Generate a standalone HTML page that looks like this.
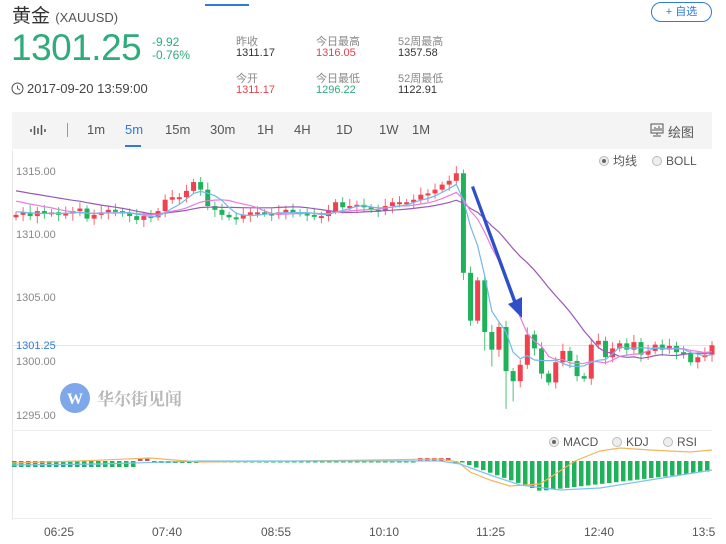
<!DOCTYPE html>
<html><head><meta charset="utf-8"><style>
*{margin:0;padding:0;box-sizing:border-box}
body{width:726px;height:544px;background:#fff;font-family:"Liberation Sans","Noto Sans CJK SC",sans-serif;position:relative;overflow:hidden;color:#333}
.a{position:absolute;white-space:nowrap}
.lb{font-size:11px;color:#888}
.v{font-size:11px;color:#333}
.tb{position:absolute;left:12px;top:112px;width:700px;height:37px;background:#f4f4f4}
.tb span{position:absolute;top:10px;font-size:13px;color:#555}
</style></head><body>
<div class="a" style="left:12px;top:1px;font-size:19px;color:#333">黄金 <span style="font-size:13px;color:#555">(XAUUSD)</span></div>
<div class="a" style="left:205px;top:4px;width:44px;height:2px;background:#2f7bd6"></div>
<div class="a" style="left:11px;top:27px;font-size:37px;color:#2fab7c;letter-spacing:-0.5px">1301.25</div>
<div class="a" style="left:152px;top:36px;font-size:12px;color:#2fab7c;line-height:13px">-9.92<br>-0.76%</div>
<div class="a lb" style="left:236px;top:33px">昨收</div><div class="a v" style="left:236px;top:47px">1311.17</div>
<div class="a lb" style="left:316px;top:33px">今日最高</div><div class="a v" style="left:316px;top:47px;color:#e4424e">1316.05</div>
<div class="a lb" style="left:398px;top:33px">52周最高</div><div class="a v" style="left:398px;top:47px">1357.58</div>
<div class="a lb" style="left:236px;top:70px">今开</div><div class="a v" style="left:236px;top:84px;color:#e4424e">1311.17</div>
<div class="a lb" style="left:316px;top:70px">今日最低</div><div class="a v" style="left:316px;top:84px;color:#2fab7c">1296.22</div>
<div class="a lb" style="left:398px;top:70px">52周最低</div><div class="a v" style="left:398px;top:84px">1122.91</div>
<svg class="a" style="left:11px;top:82px" width="13" height="13"><circle cx="6.5" cy="6.5" r="5.5" fill="none" stroke="#555" stroke-width="1"/><path d="M6.5 3.5V6.5L9 8" fill="none" stroke="#555"/></svg>
<div class="a" style="left:27px;top:81px;font-size:13px;color:#444">2017-09-20 13:59:00</div>
<div class="a" style="left:651px;top:2px;width:61px;height:20px;border:1px solid #2f7bd6;border-radius:10px;font-size:11px;color:#2f7bd6;text-align:center;line-height:18px">+ 自选</div>
<div class="tb">
<svg style="position:absolute;left:18px;top:12px" width="16" height="12"><path d="M1 5v3M4.5 2v9M8 4v6M11.5 1v10M15 5v3" stroke="#555" stroke-width="1.5"/></svg>
<div style="position:absolute;left:55px;top:11px;width:1px;height:14px;background:#999"></div>
<span style="left:75px">1m</span><span style="left:113px;color:#2f7bd6">5m</span>
<div style="position:absolute;left:113px;top:33px;width:16px;height:2px;background:#2f7bd6"></div>
<span style="left:153px">15m</span><span style="left:198px">30m</span><span style="left:245px">1H</span><span style="left:282px">4H</span><span style="left:324px">1D</span><span style="left:367px">1W</span><span style="left:400px">1M</span>
<svg style="position:absolute;left:638px;top:11px" width="14" height="14"><rect x="1" y="1" width="12" height="9" fill="none" stroke="#555"/><path d="M3 8V6M5 8V4M7 8V5M9 8V3M11 8V5M7 10v2M3 13h8" stroke="#555"/></svg>
<span style="left:656px">绘图</span>
</div>
<svg class="a" style="left:0;top:0" width="726" height="544" id="ch">
<line x1="12.5" y1="150" x2="12.5" y2="520" stroke="#e6e6e6"/>
<line x1="12" y1="345.5" x2="712" y2="345.5" stroke="#e6e6e6"/>
<line x1="12" y1="430.5" x2="712" y2="430.5" stroke="#eee"/>
<line x1="12" y1="518.5" x2="712" y2="518.5" stroke="#eee"/>
<g font-size="11" fill="#888" font-family="Liberation Sans,sans-serif">
<text x="16" y="175">1315.00</text><text x="16" y="238">1310.00</text><text x="16" y="301">1305.00</text>
<text x="16" y="349" fill="#2f7bd6">1301.25</text><text x="16" y="365">1300.00</text><text x="16" y="419">1295.00</text>
</g>
<g font-size="12" fill="#555" font-family="Liberation Sans,Noto Sans CJK SC,sans-serif">
<circle cx="604" cy="161" r="4.5" fill="#eee" stroke="#bbb"/><circle cx="604" cy="161" r="2" fill="#666"/><text x="613" y="165">均线</text>
<circle cx="657" cy="161" r="4.5" fill="#eee" stroke="#bbb"/><text x="666" y="165">BOLL</text>
<circle cx="554" cy="442" r="4.5" fill="#eee" stroke="#bbb"/><circle cx="554" cy="442" r="2" fill="#666"/><text x="563" y="446">MACD</text>
<circle cx="617" cy="442" r="4.5" fill="#eee" stroke="#bbb"/><text x="626" y="446">KDJ</text>
<circle cx="668" cy="442" r="4.5" fill="#eee" stroke="#bbb"/><text x="677" y="446">RSI</text>
</g>
<g font-size="12" fill="#555" font-family="Liberation Sans,sans-serif">
<text x="44" y="536">06:25</text><text x="152" y="536">07:40</text><text x="261" y="536">08:55</text><text x="369" y="536">10:10</text><text x="476" y="536">11:25</text><text x="584" y="536">12:40</text><text x="692" y="536">13:5</text>
</g>
<circle cx="75" cy="398" r="15" fill="#7fa8ea"/>
<text x="75" y="404" text-anchor="middle" font-size="16" font-weight="bold" fill="#fff" font-family="Liberation Serif,serif">W</text>
<text x="97" y="405" font-size="17" font-weight="bold" fill="#b8b8b8" font-family="Noto Serif CJK SC,serif">华尔街见闻</text>
<g id="c"></g>
<g id="m"></g>
<path d="M12 463 L80 461 L150 458 L200 462 L300 461 L440 459 L458 462 L470 472 L490 480 L510 486 L540 484 L575 461 L600 451 L620 448 L650 450 L690 452 L712 450" fill="none" stroke="#f5b461" stroke-width="1.2"/>
<path d="M12 465 L100 464 L200 461 L440 461 L460 464 L490 475 L520 485 L560 490 L600 488 L650 480 L712 470" fill="none" stroke="#7ec4ee" stroke-width="1.2"/>
<polygon points="471,187 474,186 516,300 522,297 522,318 508,304 513,302" fill="#2e4fc9"/>
</svg>
<script>
var cl=[1311.6,1311.8,1311.5,1311.9,1311.7,1311.8,1311.6,1311.7,1311.9,1312.1,1311.3,1311.6,1311.8,1312.0,1311.9,1311.7,1311.5,1311.2,1311.5,1311.4,1311.9,1312.8,1313.0,1313.0,1313.5,1314.2,1313.6,1312.3,1312.0,1311.6,1311.4,1311.3,1311.6,1311.8,1311.8,1311.7,1311.6,1311.8,1312.0,1311.8,1311.7,1311.6,1311.5,1311.5,1311.9,1312.6,1312.2,1312.3,1312.4,1312.2,1312.0,1311.9,1312.3,1312.6,1312.6,1312.6,1312.8,1313.2,1313.3,1313.6,1314.0,1314.3,1314.9,1307.0,1303.2,1306.4,1302.3,1300.9,1302.7,1299.2,1298.4,1299.7,1302.1,1301.0,1299.0,1298.3,1299.9,1300.8,1300.0,1298.8,1298.6,1301.3,1301.6,1300.3,1301.0,1301.4,1300.9,1301.5,1300.5,1300.8,1301.3,1300.9,1301.2,1300.7,1300.6,1299.9,1300.3,1300.5,1301.25];
var n=cl.length,i,dx=(712-16)/(n-1);
function Y(p){return 361-(p-1300)*12.6}
function X(i){return 16+i*dx}
var s='';
for(i=0;i<n;i++){var o=i?cl[i-1]:cl[0]-0.2,c=cl[i];var up=c>=o;var hi=Math.max(o,c)+0.25+((i*7)%5)*0.08,lo=Math.min(o,c)-0.25-((i*3)%5)*0.08;
if(i==63)hi=1315.2;if(i==66||i==67)lo-=1;if(i==69){lo=1296.2}if(i==70)lo=1296.8;
var col=up?'#f0424e':'#1fb25a';var x=X(i);
s+='<line x1="'+x+'" y1="'+Y(hi)+'" x2="'+x+'" y2="'+Y(lo)+'" stroke="'+col+'" stroke-width="1" opacity="0.8"/>';
var t=Y(Math.max(o,c)),b=Y(Math.min(o,c));if(b-t<2)b=t+2;
s+='<rect x="'+(x-2.5)+'" y="'+t+'" width="5" height="'+(b-t)+'" fill="'+col+'"/>';}
function ma(k,c0){var p='';for(var i=0;i<n;i++){var sm=0;for(var j=0;j<k;j++){sm+=(i-j>=0?cl[i-j]:c0)}p+=(i?'L':'M')+X(i).toFixed(1)+' '+Y(sm/k).toFixed(1)}return p}
s+='<path d="'+ma(20,1313.6)+'" fill="none" stroke="#9b59b6" stroke-width="1.2"/>';
s+='<path d="'+ma(10,1312.8)+'" fill="none" stroke="#e87ddc" stroke-width="1.2"/>';
s+='<path d="'+ma(5,1311.9)+'" fill="none" stroke="#74b7ec" stroke-width="1.2"/>';
document.getElementById('c').innerHTML=s;
var m='',z=461;
for(var x=14;x<=712;x+=7){var h,col='#1fb25a';
if(x<135)h=-6;else if(x<152){h=3;col='#c9506a'}else if(x<200)h=-2;else if(x<415)h=-1.5;else if(x<452){h=3;col='#c9506a'}
else if(x<458)h=-2;else{var t;if(x<540)t=(x-458)/82*30;else t=30-(x-540)/172*20;h=-t;}
m+='<rect x="'+(x-2)+'" y="'+(h<0?z:z-h)+'" width="4.5" height="'+Math.abs(h)+'" fill="'+col+'"/>';}
document.getElementById('m').innerHTML=m;
</script>
</body></html>
